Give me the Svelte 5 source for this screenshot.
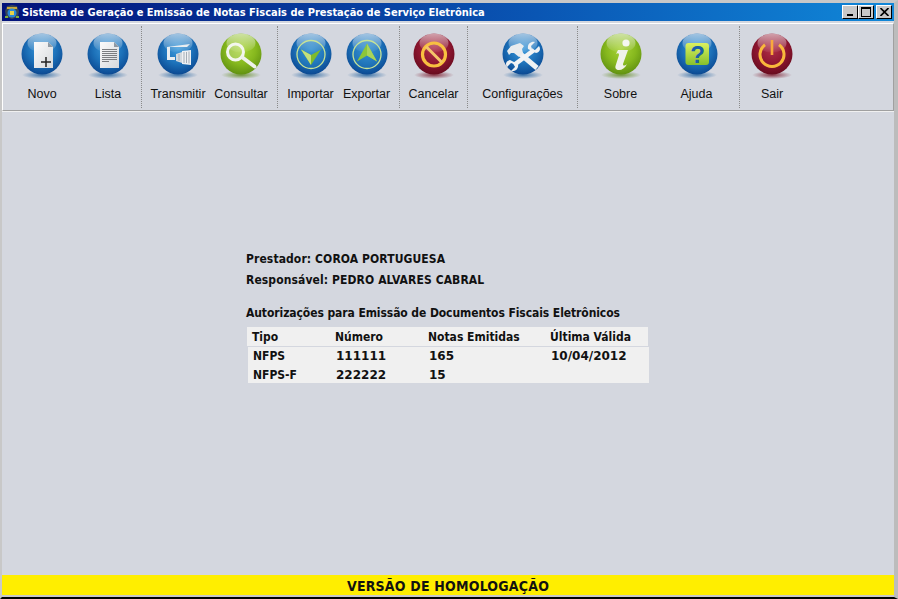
<script>
  const groups = [
    { w: 132, items: [{ label: "Novo", w: 66, color: "blue", glyph: "novo" }, { label: "Lista", w: 66, color: "blue", glyph: "lista" }] },
    { w: 135, items: [{ label: "Transmitir", w: 63, color: "blue", glyph: "transmitir" }, { label: "Consultar", w: 63, color: "green", glyph: "consultar" }] },
    { w: 121, items: [{ label: "Importar", w: 56, color: "blue", glyph: "importar" }, { label: "Exportar", w: 56, color: "blue", glyph: "exportar" }] },
    { w: 67, items: [{ label: "Cancelar", w: 60, color: "red", glyph: "cancelar" }] },
    { w: 109, items: [{ label: "Configurações", w: 100, color: "blue", glyph: "config" }] },
    { w: 161, items: [{ label: "Sobre", w: 76, color: "green", glyph: "sobre" }, { label: "Ajuda", w: 76, color: "blue", glyph: "ajuda" }] },
    { w: 64, items: [{ label: "Sair", w: 60, color: "red", glyph: "sair" }] }
  ];

  const rows = [
    { tipo: "NFPS", numero: "111111", notas: "165", ultima: "10/04/2012" },
    { tipo: "NFPS-F", numero: "222222", notas: "15", ultima: "" }
  ];
</script>

<svg class="defs" width="0" height="0">
  <defs>
    <radialGradient id="blue" cx="50%" cy="38%" r="66%">
      <stop offset="0" stop-color="#3f9cdc" />
      <stop offset="0.55" stop-color="#1c70b8" />
      <stop offset="0.88" stop-color="#0e4f98" />
      <stop offset="1" stop-color="#0d4488" />
    </radialGradient>
    <radialGradient id="green" cx="50%" cy="38%" r="66%">
      <stop offset="0" stop-color="#a8d436" />
      <stop offset="0.55" stop-color="#86b81e" />
      <stop offset="1" stop-color="#5c8c10" />
    </radialGradient>
    <radialGradient id="red" cx="50%" cy="38%" r="66%">
      <stop offset="0" stop-color="#b03048" />
      <stop offset="0.55" stop-color="#8e1630" />
      <stop offset="1" stop-color="#620a1c" />
    </radialGradient>
    <linearGradient id="shine" x1="0" y1="0" x2="0" y2="1">
      <stop offset="0" stop-color="#fff" stop-opacity="0.6" />
      <stop offset="1" stop-color="#fff" stop-opacity="0.04" />
    </linearGradient>
    <linearGradient id="sheet" x1="0" y1="0" x2="1" y2="1">
      <stop offset="0" stop-color="#fbfbfb" />
      <stop offset="1" stop-color="#d6d9dc" />
    </linearGradient>
    <linearGradient id="card" x1="0" y1="0" x2="0" y2="1">
      <stop offset="0" stop-color="#dcf060" />
      <stop offset="1" stop-color="#86c02c" />
    </linearGradient>
    <radialGradient id="shadow-blue">
      <stop offset="0" stop-color="#1d5f9e" stop-opacity="0.85" />
      <stop offset="1" stop-color="#1d5f9e" stop-opacity="0" />
    </radialGradient>
    <radialGradient id="shadow-green">
      <stop offset="0" stop-color="#5f8a1a" stop-opacity="0.85" />
      <stop offset="1" stop-color="#5f8a1a" stop-opacity="0" />
    </radialGradient>
    <radialGradient id="shadow-red">
      <stop offset="0" stop-color="#7d1a2c" stop-opacity="0.85" />
      <stop offset="1" stop-color="#7d1a2c" stop-opacity="0" />
    </radialGradient>
  </defs>
</svg>

{#snippet glyph(name)}
  {#if name === "novo"}
    <path d="M16 12h14l5 5v21H16z" fill="url(#sheet)" />
    <path d="M30 12l5 5h-5z" fill="#8f99a3" />
    <path d="M23 32h10M28 27v10" stroke="#222" stroke-width="1.500" fill="none" />
  {:else if name === "lista"}
    <path d="M16 12h14l5 5v21H16z" fill="url(#sheet)" />
    <path d="M30 12l5 5h-5z" fill="#8f99a3" />
    <path d="M18 19.500h15M18 21.500h15M18 23.500h15M18 25.500h15M18 27.500h15M18 29.500h15M18 31.500h7" stroke="#7b7d80" stroke-width="1" fill="none" />
  {:else if name === "transmitir"}
    <path d="M13 17l23-3-3 3H16v10h5v3h-8z" fill="#e9edf0" />
    <path d="M22 24l6-2v11l-6-2z" fill="#d3d9de" />
    <path d="M28 21l9-1v15l-9-1z" fill="#eef0f2" />
    <path d="M25 24v7M30 22v11M32.500 22v11M35 21.500v12" stroke="#a4adb6" stroke-width="1" fill="none" />
  {:else if name === "consultar"}
    <circle cx="18.500" cy="22" r="8" fill="#ffffff" fill-opacity="0.22" stroke="#f3f6ee" stroke-width="3" />
    <path d="M25.500 27.500l12 9" stroke="#eef1ea" stroke-width="3.800" stroke-linecap="round" />
  {:else if name === "importar"}
    <circle cx="24" cy="24.500" r="14" fill="#2f84bf" fill-opacity="0.3" stroke="#c8e396" stroke-width="1.300" />
    <path d="M14 19.500l10 5.500 10-5.500-10 15.500z" fill="#7fbb2c" />
    <path d="M14 19.500l10 5.500v10z" fill="#c4e07c" />
  {:else if name === "exportar"}
    <circle cx="24" cy="24.500" r="14" fill="#2f84bf" fill-opacity="0.3" stroke="#c8e396" stroke-width="1.300" />
    <path d="M14 31.500l10-6 10 6-10-18z" fill="#8cc63a" />
    <path d="M24 13.500v12l10 6z" fill="#a9d45a" />
  {:else if name === "cancelar"}
    <circle cx="24" cy="24.500" r="11.500" fill="none" stroke="#f8c040" stroke-width="3.200" />
    <path d="M16 16.500l16 16" stroke="#f4c66a" stroke-width="3" />
  {:else if name === "config"}
    <path d="M19 22l19 16" stroke="#eef1f3" stroke-width="5" />
    <path d="M8 21l4-5 9-3 4 3-2 3 1 4-4 4-5-4h-3l-2 2z" fill="#e9ecee" />
    <path d="M15 35l20-15" stroke="#f2f4f5" stroke-width="4.500" />
    <path d="M40 16l-4 4-3-1-1-3 4-4c-4-1-8 2-7 7l8 4c4-1 5-4 3-7zM8 37l4-4 3 1 1 3-4 4c4 1 8-2 7-7l-8-4c-4 1-5 4-3 7z" fill="#eef1f3" />
  {:else if name === "sobre"}
    <circle cx="29" cy="13" r="3.600" fill="#f6f7f2" />
    <path d="M21 20h10l-5 14c0 2 1.500 2 4 0-2 4-5 6-8 6-3 0-4-2-3.500-4l3.500-11c0-2-1.500-2-3-1z" fill="#f0f2ea" />
  {:else if name === "ajuda"}
    <rect x="12.500" y="13" width="23.500" height="22" rx="3" fill="url(#card)" />
    <text x="24.500" y="32.500" class="qmark">?</text>
  {:else if name === "sair"}
    <path d="M17 14.800a12 12 0 1 0 14 0" fill="none" stroke="#f9b83c" stroke-width="3" />
    <path d="M24 10v15" stroke="#f9a93c" stroke-width="2.600" />
  {/if}
{/snippet}

<div class="window">
  <div class="titlebar">
    <svg class="appicon" width="16" height="16" viewBox="0 0 16 16">
      <path d="M1 7l2-5 5-1 5 1 2 5-1 6-6 2-6-2z" fill="#3a4654" />
      <path d="M3 3h10v2H3z" fill="#c9a83a" />
      <circle cx="8" cy="9" r="4.500" fill="#2a88d8" />
      <path d="M6 7h4v4H6z" fill="#e8d24a" />
      <path d="M1 12h3v2H1zM12 12h3v2h-3z" fill="#7fae3a" />
    </svg>
    <span class="title">Sistema de Geração e Emissão de Notas Fiscais de Prestação de Serviço Eletrônica</span>
    <div class="controls">
      <button class="ctl" aria-label="Minimizar"><span class="min"></span></button>
      <button class="ctl" aria-label="Maximizar"><span class="max"></span></button>
      <button class="ctl close" aria-label="Fechar">
        <svg width="9" height="8" viewBox="0 0 9 8"><path d="M.5 0l8 8M8.500 0l-8 8" stroke="#000" stroke-width="1.600" fill="none" /></svg>
      </button>
    </div>
  </div>

  <nav class="toolbar">
    {#each groups as group, i}
      {#if i > 0}<div class="sep"></div>{/if}
      <div class="group" style:width="{group.w}px">
        {#each group.items as b}
          <div class="tool" style:width="{b.w}px">
            <svg width="48" height="50" viewBox="0 0 48 50">
              <ellipse cx="24" cy="45" rx="20" ry="4" fill="url(#shadow-{b.color})" />
              <circle cx="24" cy="24" r="20.500" fill="url(#{b.color})" />
              <ellipse cx="24" cy="13" rx="14.500" ry="9.500" fill="url(#shine)" />
              {@render glyph(b.glyph)}
            </svg>
            <span>{b.label}</span>
          </div>
        {/each}
      </div>
    {/each}
  </nav>

  <main class="content">
    <p class="info">Prestador: COROA PORTUGUESA</p>
    <p class="info">Responsável: PEDRO ALVARES CABRAL</p>
    <p class="heading">Autorizações para Emissão de Documentos Fiscais Eletrônicos</p>
    <div class="row head">
      <span>Tipo</span><span>Número</span><span>Notas Emitidas</span><span>Última Válida</span>
    </div>
    <div class="body">
      {#each rows as r}
        <div class="row">
          <span>{r.tipo}</span><span class="num">{r.numero}</span><span class="num">{r.notas}</span><span class="num">{r.ultima}</span>
        </div>
      {/each}
    </div>
  </main>

  <footer class="banner">VERSÃO DE HOMOLOGAÇÃO</footer>
</div>

<style>
  :global(body) {
    margin: 0;
    background: #000;
  }

  .defs {
    position: absolute;
  }

  .window {
    width: 898px;
    height: 599px;
    box-sizing: border-box;
    display: flex;
    flex-direction: column;
    border-top: 3px solid #c8c8c8;
    border-left: 2px solid #c8c8c8;
    border-right: 4px solid #bcbcbc;
    border-bottom: 2px solid #000;
    background: #d4d7df;
  }

  .titlebar {
    height: 18px;
    flex: none;
    display: flex;
    align-items: center;
    background: linear-gradient(90deg, #02127a 0%, #0a56b4 60%, #1087d8 100%);
    color: #fff;
  }

  .appicon {
    margin-left: 2px;
    flex: none;
  }

  .title {
    margin-left: 2px;
    font: bold 11px "DejaVu Sans Condensed", "DejaVu Sans", sans-serif;
    font-stretch: condensed;
    white-space: nowrap;
  }

  .controls {
    margin-left: auto;
    margin-right: 2px;
    display: flex;
  }

  .ctl {
    width: 16px;
    height: 14px;
    padding: 0;
    border: 1px solid;
    border-color: #fff #000 #000 #fff;
    background: #c8c8c8;
    display: flex;
    align-items: center;
    justify-content: center;
  }

  .close {
    margin-left: 2px;
  }

  .min {
    width: 6px;
    height: 2px;
    background: #000;
    margin-top: 6px;
  }

  .max {
    width: 8px;
    height: 7px;
    border: 1px solid #000;
    border-top-width: 2px;
  }

  .toolbar {
    height: 88px;
    flex: none;
    box-sizing: border-box;
    margin-top: 2px;
    display: flex;
    align-items: stretch;
    border: 1px solid;
    border-color: #fff #a0a0a0 #a0a0a0 #fff;
    background: #d4d7df;
    padding: 2px 0 2px 6px;
  }

  .group {
    display: flex;
    justify-content: center;
  }

  .sep {
    width: 0;
    border-left: 1px dotted #8a8a8a;
  }

  .tool {
    display: flex;
    flex-direction: column;
    align-items: center;
    padding-top: 4px;
    font: 12.5px "Liberation Sans", sans-serif;
    color: #111;
    white-space: nowrap;
  }

  .tool span {
    margin-top: 7px;
  }

  .qmark {
    font: bold 24px "Liberation Sans", sans-serif;
    fill: #1a5fa8;
    text-anchor: middle;
  }

  .content {
    flex: 1;
    min-height: 0;
    border-top: 1px solid #f0f0f0;
    padding: 139px 0 0 244px;
    font: bold 12px "DejaVu Sans Condensed", "DejaVu Sans", sans-serif;
    font-stretch: condensed;
    color: #111;
  }

  .info {
    margin: 0 0 4px;
    line-height: 17px;
    letter-spacing: 0.1px;
    white-space: nowrap;
  }

  .heading {
    margin: 16px 0 5px;
    line-height: 17px;
    letter-spacing: -0.085px;
    white-space: nowrap;
  }

  .row {
    display: grid;
    grid-template-columns: 83px 93px 122px 1fr;
    width: 396px;
    padding-left: 5px;
    line-height: 19px;
  }

  .head {
    margin-left: 1px;
    height: 19px;
    line-height: 20px;
    background: #f0f0f0;
  }

  .body {
    margin: 1px 0 0 2px;
    width: 401px;
    height: 36px;
    background: #f0f0f0;
  }

  .num {
    font-family: "DejaVu Sans", sans-serif;
    font-stretch: normal;
  }

  .banner {
    height: 20px;
    flex: none;
    background: #ffee00;
    color: #111;
    font: bold 14px "DejaVu Sans Condensed", "DejaVu Sans", sans-serif;
    font-stretch: condensed;
    letter-spacing: 0.2px;
    text-align: center;
    line-height: 22px;
    border-bottom: 2px solid #c8c8c8;
  }
</style>
